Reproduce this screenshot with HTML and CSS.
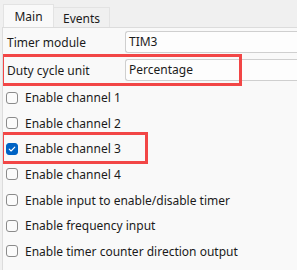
FILE: index.html
```html
<!DOCTYPE html>
<html>
<head>
<meta charset="utf-8">
<link rel="stylesheet" href="styles.css">
</head>
<body>
<div class="tabs">
  <div class="tab active">Main</div>
  <div class="tab">Events</div>
</div>
<div class="panel">
  <div class="field">
    <span class="label">Timer module</span>
    <span class="input">TIM3</span>
  </div>
  <div class="field highlight-wide">
    <span class="label">Duty cycle unit</span>
    <span class="input">Percentage</span>
  </div>
  <div class="checks">
    <div class="check"><span class="box"></span><span>Enable channel 1</span></div>
    <div class="check"><span class="box"></span><span>Enable channel 2</span></div>
    <div class="check highlight-narrow"><span class="box checked"><svg viewBox="0 0 12 12" width="12" height="12"><path d="M3.2 6.2 L5.1 8 L8.8 4.2" fill="none" stroke="#fff" stroke-width="1.1" stroke-linecap="round" stroke-linejoin="round"/></svg></span><span>Enable channel 3</span></div>
    <div class="check"><span class="box"></span><span>Enable channel 4</span></div>
    <div class="check"><span class="box"></span><span>Enable input to enable/disable timer</span></div>
    <div class="check"><span class="box"></span><span>Enable frequency input</span></div>
    <div class="check"><span class="box"></span><span>Enable timer counter direction output</span></div>
  </div>
</div>
</body>
</html>
```
FILE: styles.css
```css
html, body {
  margin: 0;
  padding: 0;
  overflow: hidden;
}
body {
  background: #f0f0f0;
  font-family: "Noto Sans", "Open Sans", sans-serif;
  font-size: 12px;
  color: #1b1b1b;
  width: 297px;
  height: 270px;
}
.tabs {
  display: flex;
  align-items: flex-end;
  height: 27px;
  padding-left: 3px;
}
.tab {
  box-sizing: border-box;
  height: 20px;
  width: 56px;
  display: flex;
  align-items: center;
  justify-content: center;
  border: 1px solid #e3e3e3;
  border-bottom: none;
  border-left: none;
  background: #f0f0f0;
  padding-top: 1px;
}
.tab.active {
  height: 23px;
  width: 51px;
  background: #f9f9f9;
  border-left: 1px solid #e3e3e3;
  padding-top: 0;
}
.panel {
  box-sizing: border-box;
  margin-left: 2px;
  border-left: 1px solid #dcdcdc;
  border-top: 1px solid #dcdcdc;
  background: #f9f9f9;
  height: 243px;
  padding-top: 3px;
  overflow: hidden;
}
.field {
  position: relative;
  display: flex;
  align-items: center;
  height: 22px;
  margin-bottom: 6px;
}
.label {
  width: 118px;
  padding-left: 4px;
  flex: none;
}
.input {
  box-sizing: border-box;
  flex: 1;
  height: 22px;
  line-height: 20px;
  padding-left: 3px;
  background: #fdfdfd;
  border: 1px solid #cfcfcf;
  border-right: none;
  border-radius: 3px 0 0 3px;
}
.checks {
  margin-top: -2.33px;
}
.check {
  position: relative;
  display: flex;
  align-items: center;
  gap: 7px;
  height: 25.67px;
  padding-left: 3px;
}
.box {
  box-sizing: border-box;
  width: 12px;
  height: 12px;
  border: 1px solid #8b8b8b;
  border-radius: 3px;
  background: #fbfbfb;
  flex: none;
  display: flex;
}
.box.checked {
  background: #0063c4;
  border-color: #0063c4;
}
.box.checked svg {
  margin: -1px;
}
.highlight-wide::after,
.highlight-narrow::after {
  content: "";
  position: absolute;
  box-sizing: border-box;
  border: 3px solid #f24646;
  left: -2px;
}
.highlight-wide::after {
  top: -5px;
  width: 241px;
  height: 32px;
}
.highlight-narrow::after {
  top: -4px;
  width: 147px;
  height: 32px;
}
```
